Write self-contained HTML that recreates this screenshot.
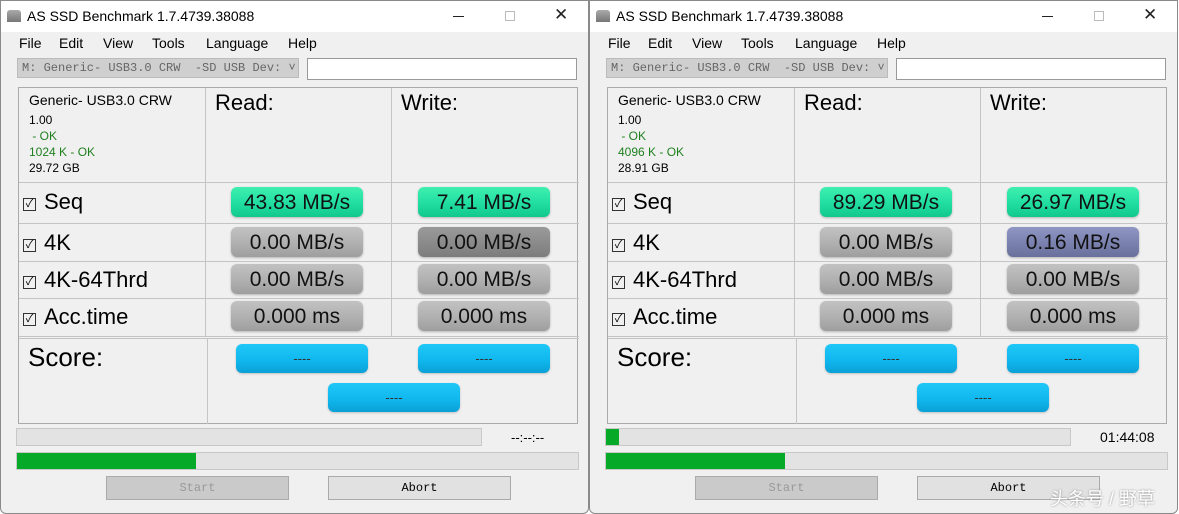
<!DOCTYPE html><html><head><meta charset="utf-8"><style>
*{margin:0;padding:0;box-sizing:border-box}
body{width:1179px;height:514px;background:#fff;position:relative;overflow:hidden;font-family:"Liberation Sans","Noto Sans CJK SC",sans-serif}
.w{position:absolute;top:0;width:589px;height:514px;background:#f0f0f0;border:1px solid #8a8a8a;border-radius:0 0 6px 6px}
.a{position:absolute}
.tb{left:0;top:0;width:587px;height:31px;background:#fff}
.ttl{left:26px;top:7px;font-size:14px;color:#000}
.menu{top:34px;font-size:14px;color:#000}
.combo{left:16px;top:57px;width:282px;height:20px;background:#cfcfcf;border:1px solid #bbb;font-family:"Liberation Mono",monospace;font-size:12px;color:#666;padding:2px 4px;white-space:nowrap;overflow:hidden}
.tx{left:306px;top:57px;width:270px;height:22px;background:#fff;border:1px solid #999}
.grid{left:17px;top:86px;width:560px;height:337px;border:1px solid #aaa}
.hl{position:absolute;height:1px;background:#c4c4c4;left:0;width:560px}
.vl{position:absolute;width:1px;background:#c4c4c4}
.lbl{font-size:22px;color:#000;left:27px}
.cb{display:inline-block;width:13px;height:13px;border:1px solid #333;font-size:11px;line-height:11px;text-align:center;margin-right:8px;vertical-align:2px}
.pill{width:132px;height:30px;border-radius:6px;font-size:21px;text-align:center;line-height:31px;color:#111;box-shadow:0 1px 2px rgba(0,0,0,.25)}
.g{background:linear-gradient(#3ff0b0,#20dea0 55%,#12c88c)}
.gr{background:linear-gradient(#c2c2c2,#b0b0b0 55%,#9e9e9e)}
.dg{background:linear-gradient(#9a9a9a,#8a8a8a 55%,#7c7c7c)}
.bl{background:linear-gradient(#8f96c4,#7a81ae 55%,#6a709c)}
.sc{width:132px;height:29px;border-radius:6px;background:linear-gradient(#20c8f8,#10b8ee 55%,#0aa0d6);text-align:center;font-size:13px;line-height:30px;color:#333;box-shadow:0 1px 2px rgba(0,0,0,.2)}
.pb{background:#e3e3e3;border:1px solid #c8c8c8}
.btn{top:475px;width:183px;height:24px;border:1px solid #aaa;font-family:"Liberation Mono",monospace;font-size:12px;text-align:center;line-height:22px}
</style></head><body>

<div class="w" style="left:0">
<div class="a tb"></div>
<div class="a" style="left:6px;top:9px;width:14px;height:12px;background:linear-gradient(#aaa,#777);border-radius:3px 3px 0 0"></div>
<div class="a ttl">AS SSD Benchmark 1.7.4739.38088</div>
<div class="a" style="left:452px;top:15px;width:11px;height:1px;background:#222"></div>
<div class="a" style="left:504px;top:10px;width:10px;height:10px;border:1px solid #bbb"></div>
<div class="a" style="left:553px;top:4px;font-size:17px;color:#222">✕</div>
<div class="a menu" style="left:18px">File</div><div class="a menu" style="left:58px">Edit</div><div class="a menu" style="left:102px">View</div><div class="a menu" style="left:151px">Tools</div><div class="a menu" style="left:205px">Language</div><div class="a menu" style="left:287px">Help</div>
<div class="a combo">M: Generic- USB3.0 CRW &nbsp;-SD USB Dev: ˅</div>
<div class="a tx"></div>
<div class="a grid">
<div class="vl" style="left:186px;top:0;height:248px"></div><div class="vl" style="left:372px;top:0;height:248px"></div>
<div class="vl" style="left:188px;top:250px;height:86px"></div>
<div class="hl" style="top:94px"></div><div class="hl" style="top:135px"></div><div class="hl" style="top:173px"></div><div class="hl" style="top:210px"></div><div class="hl" style="top:248px"></div><div class="hl" style="top:250px"></div>
</div>
<div class="a" style="left:28px;top:91px;font-size:14px">Generic- USB3.0 CRW</div>
<div class="a" style="left:28px;top:111px;font-size:12px;line-height:16px">1.00<br><span style="color:#208020">&nbsp;- OK<br>1024 K - OK</span><br>29.72 GB</div>
<div class="a" style="left:214px;top:89px;font-size:22px">Read:</div>
<div class="a" style="left:400px;top:89px;font-size:22px">Write:</div>
<div class="a lbl" style="left:22px;top:188px"><span class="cb">✓</span>Seq</div>
<div class="a lbl" style="left:22px;top:229px"><span class="cb">✓</span>4K</div>
<div class="a lbl" style="left:22px;top:266px"><span class="cb">✓</span>4K-64Thrd</div>
<div class="a lbl" style="left:22px;top:303px"><span class="cb">✓</span>Acc.time</div>
<div class="a" style="left:27px;top:341px;font-size:26px">Score:</div>
<div class="a pill g" style="left:230px;top:186px">43.83 MB/s</div><div class="a pill g" style="left:417px;top:186px">7.41 MB/s</div>
<div class="a pill gr" style="left:230px;top:226px">0.00 MB/s</div><div class="a pill dg" style="left:417px;top:226px">0.00 MB/s</div>
<div class="a pill gr" style="left:230px;top:263px">0.00 MB/s</div><div class="a pill gr" style="left:417px;top:263px">0.00 MB/s</div>
<div class="a pill gr" style="left:230px;top:300px">0.000 ms</div><div class="a pill gr" style="left:417px;top:300px">0.000 ms</div>
<div class="a sc" style="left:235px;top:343px">----</div><div class="a sc" style="left:417px;top:343px">----</div><div class="a sc" style="left:327px;top:382px">----</div>
<div class="a pb" style="left:15px;top:427px;width:466px;height:18px"></div>
<div class="a" style="left:510px;top:429px;font-size:13px">--:--:--</div>
<div class="a pb" style="left:15px;top:451px;width:563px;height:18px"><div style="width:179px;height:16px;background:#06a928"></div></div>
<div class="a btn" style="left:105px;background:#cacaca;color:#999">Start</div>
<div class="a btn" style="left:327px;background:#e1e1e1;color:#000">Abort</div>
</div>

<div class="w" style="left:589px">
<div class="a tb"></div>
<div class="a" style="left:6px;top:9px;width:14px;height:12px;background:linear-gradient(#aaa,#777);border-radius:3px 3px 0 0"></div>
<div class="a ttl">AS SSD Benchmark 1.7.4739.38088</div>
<div class="a" style="left:452px;top:15px;width:11px;height:1px;background:#222"></div>
<div class="a" style="left:504px;top:10px;width:10px;height:10px;border:1px solid #bbb"></div>
<div class="a" style="left:553px;top:4px;font-size:17px;color:#222">✕</div>
<div class="a menu" style="left:18px">File</div><div class="a menu" style="left:58px">Edit</div><div class="a menu" style="left:102px">View</div><div class="a menu" style="left:151px">Tools</div><div class="a menu" style="left:205px">Language</div><div class="a menu" style="left:287px">Help</div>
<div class="a combo">M: Generic- USB3.0 CRW &nbsp;-SD USB Dev: ˅</div>
<div class="a tx"></div>
<div class="a grid">
<div class="vl" style="left:186px;top:0;height:248px"></div><div class="vl" style="left:372px;top:0;height:248px"></div>
<div class="vl" style="left:188px;top:250px;height:86px"></div>
<div class="hl" style="top:94px"></div><div class="hl" style="top:135px"></div><div class="hl" style="top:173px"></div><div class="hl" style="top:210px"></div><div class="hl" style="top:248px"></div><div class="hl" style="top:250px"></div>
</div>
<div class="a" style="left:28px;top:91px;font-size:14px">Generic- USB3.0 CRW</div>
<div class="a" style="left:28px;top:111px;font-size:12px;line-height:16px">1.00<br><span style="color:#208020">&nbsp;- OK<br>4096 K - OK</span><br>28.91 GB</div>
<div class="a" style="left:214px;top:89px;font-size:22px">Read:</div>
<div class="a" style="left:400px;top:89px;font-size:22px">Write:</div>
<div class="a lbl" style="left:22px;top:188px"><span class="cb">✓</span>Seq</div>
<div class="a lbl" style="left:22px;top:229px"><span class="cb">✓</span>4K</div>
<div class="a lbl" style="left:22px;top:266px"><span class="cb">✓</span>4K-64Thrd</div>
<div class="a lbl" style="left:22px;top:303px"><span class="cb">✓</span>Acc.time</div>
<div class="a" style="left:27px;top:341px;font-size:26px">Score:</div>
<div class="a pill g" style="left:230px;top:186px">89.29 MB/s</div><div class="a pill g" style="left:417px;top:186px">26.97 MB/s</div>
<div class="a pill gr" style="left:230px;top:226px">0.00 MB/s</div><div class="a pill bl" style="left:417px;top:226px">0.16 MB/s</div>
<div class="a pill gr" style="left:230px;top:263px">0.00 MB/s</div><div class="a pill gr" style="left:417px;top:263px">0.00 MB/s</div>
<div class="a pill gr" style="left:230px;top:300px">0.000 ms</div><div class="a pill gr" style="left:417px;top:300px">0.000 ms</div>
<div class="a sc" style="left:235px;top:343px">----</div><div class="a sc" style="left:417px;top:343px">----</div><div class="a sc" style="left:327px;top:382px">----</div>
<div class="a pb" style="left:15px;top:427px;width:466px;height:18px"><div style="width:13px;height:16px;background:#06a928"></div></div>
<div class="a" style="left:510px;top:428px;font-size:14px">01:44:08</div>
<div class="a pb" style="left:15px;top:451px;width:563px;height:18px"><div style="width:179px;height:16px;background:#06a928"></div></div>
<div class="a btn" style="left:105px;background:#cacaca;color:#999">Start</div>
<div class="a btn" style="left:327px;background:#e1e1e1;color:#000">Abort</div>
<div class="a" style="left:460px;top:484px;font-size:18px;color:#fff;text-shadow:0 0 2px #888">头条号 / 野草</div>
</div>
</body></html>
